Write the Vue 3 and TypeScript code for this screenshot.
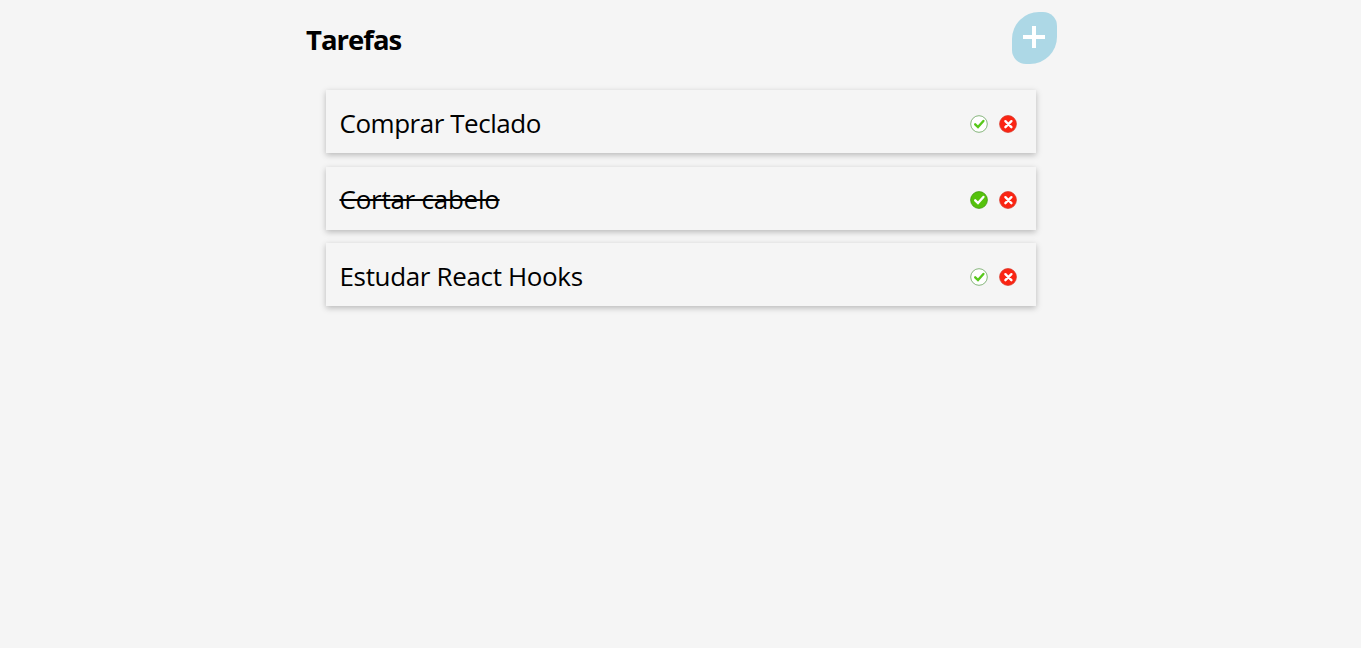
<script setup lang="ts">
import { ref } from 'vue'

interface Task {
  id: number
  title: string
  done: boolean
  spacing: 'tight' | 'loose' | 'medium'
}

const tasks = ref<Task[]>([
  { id: 1, title: 'Comprar Teclado', done: false, spacing: 'tight' },
  { id: 2, title: 'Cortar cabelo', done: true, spacing: 'loose' },
  { id: 3, title: 'Estudar React Hooks', done: false, spacing: 'medium' },
])

function toggle(task: Task): void {
  task.done = !task.done
}

function remove(id: number): void {
  tasks.value = tasks.value.filter((t) => t.id !== id)
}
</script>

<template>
  <main class="page">
    <header class="header">
      <h1 class="title">Tarefas</h1>
      <button class="add" aria-label="Adicionar">
        <svg width="22" height="22" viewBox="0 0 22 22">
          <path d="M9 0h4v9h9v4h-9v9H9v-9H0V9h9z" fill="#fff" />
        </svg>
      </button>
    </header>
    <ul class="list">
      <li v-for="task in tasks" :key="task.id" class="card">
        <span class="name" :class="[task.spacing, { done: task.done }]">{{ task.title }}</span>
        <button class="icon" aria-label="Concluir" @click="toggle(task)">
          <svg width="18" height="18" viewBox="0 0 18 18">
            <circle v-if="task.done" cx="9" cy="9" r="8.4" fill="#55c20c" stroke="#459c16" stroke-width=".8" />
            <circle v-else cx="9" cy="9" r="8.3" fill="#fff" stroke="#86b67c" stroke-width="1" />
            <path d="M5.2 9.3 8 12 13.4 6" fill="none" stroke-linecap="round" :stroke="task.done ? '#fff' : '#57c81a'" stroke-width="2.4" />
          </svg>
        </button>
        <button class="icon" aria-label="Remover" @click="remove(task.id)">
          <svg width="18" height="18" viewBox="0 0 18 18">
            <circle cx="9" cy="9" r="8.4" fill="#fb2412" stroke="#d93a2c" stroke-width=".8" />
            <path d="m6.4 6.2 6 6m0-6-6 6" fill="none" stroke="#fff" stroke-linecap="round" stroke-width="2.4" />
          </svg>
        </button>
      </li>
    </ul>
  </main>
</template>

<style>
body {
  background: #f5f5f5;
}
</style>

<style scoped>
.page {
  box-sizing: border-box;
  width: 751px;
  min-height: 100vh;
  margin-left: 306px;
  padding-top: 12px;
  color: #000;
  font-family: 'Segoe UI', 'Open Sans', 'Noto Sans', sans-serif;
}
.header {
  display: flex;
  align-items: center;
  justify-content: space-between;
  height: 52px;
}
.title {
  margin: 3px 0 0;
  font-size: 27.5px;
  line-height: 40px;
  font-weight: 700;
  letter-spacing: -1px;
}
.add {
  display: flex;
  justify-content: center;
  width: 45px;
  height: 52px;
  padding: 14px 1px 0 0;
  border: 0;
  border-radius: 27px 14px;
  background: #add8e6;
  cursor: pointer;
}
.list {
  display: flex;
  flex-direction: column;
  gap: 13.4px;
  width: 710px;
  margin: 26.3px 0 0 20px;
  padding: 0;
  list-style: none;
}
.card {
  display: flex;
  align-items: center;
  box-sizing: border-box;
  height: 63px;
  padding: 4px 19px 0 14px;
  background: #f5f5f5;
  box-shadow: 0 2px 6px rgba(0, 0, 0, 0.25);
}
.name {
  margin: -2px auto 0 -0.5px;
  font-size: 26px;
  line-height: 36px;
  white-space: nowrap;
}
.tight {
  letter-spacing: -0.47px;
}
.loose {
  letter-spacing: -0.25px;
}
.medium {
  letter-spacing: -0.35px;
}
.done {
  text-decoration: line-through;
  text-decoration-thickness: 2px;
}
.icon {
  display: flex;
  margin: 0 0 0 11px;
  padding: 0;
  border: 0;
  background: none;
  cursor: pointer;
}
</style>
